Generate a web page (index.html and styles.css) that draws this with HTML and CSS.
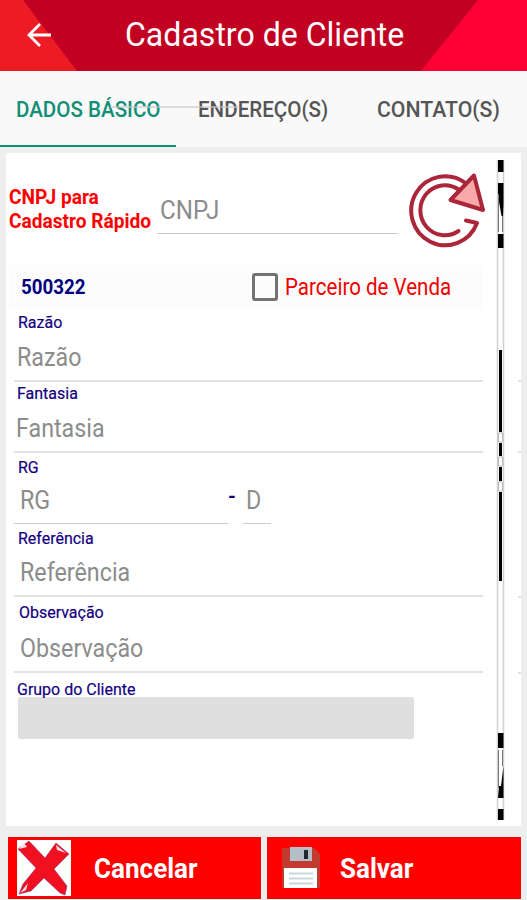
FILE: index.html
```html
<!DOCTYPE html>
<html lang="pt-BR">
<head>
  <meta charset="UTF-8" />
  <meta name="viewport" content="width=device-width, initial-scale=1.0" />
  <title>Cadastro de Cliente</title>
  <link rel="stylesheet" href="styles.css">
</head>
<body>
  <header>
    <svg class="back" viewBox="0 0 26 26" width="26" height="26">
      <path d="M25 13H3M14 2L3 13l11 11" fill="none" stroke="#fff" stroke-width="2.800" />
    </svg>
    <h1><span class="squeeze">Cadastro de Cliente</span></h1>
  </header>

  <nav class="tabs">
    <a class="tab active"><span class="squeeze">DADOS BÁSICO</span></a>
    <a class="tab"><span class="squeeze">ENDEREÇO(S)</span></a>
    <a class="tab last"><span class="squeeze">CONTATO(S)</span></a>
    <div class="strike"></div>
  </nav>

  <main class="card">
    <form>
      <div class="cnpj-row">
        <div class="cnpj-label"><span class="squeeze">CNPJ para<br>Cadastro Rápido</span></div>
        <div class="cnpj-input"><span class="squeeze">CNPJ</span></div>
        <svg class="reload" viewBox="0 0 78 78" width="78" height="78">
          <g fill="none" stroke="#ab2638" stroke-width="4" stroke-linecap="round" stroke-linejoin="round">
            <path d="M57.500 11A34 34.500 0 1 0 69 51L58 48.500" />
            <path d="M50.500 17.500A24.500 25 0 1 0 50.500 59" />
            <path d="M66 3.500L42.500 28L75 38Z" fill="#f9a9a9" />
          </g>
        </svg>
      </div>

      <div class="code-row">
        <div class="code"><span class="squeeze">500322</span></div>
        <div class="check"></div>
        <div class="partner"><span class="squeeze">Parceiro de Venda</span></div>
      </div>

      <div class="field razao">
        <label><span class="squeeze">Razão</span></label>
        <div class="value"><span class="squeeze">Razão</span></div>
      </div>
      <div class="field fantasia">
        <label><span class="squeeze">Fantasia</span></label>
        <div class="value"><span class="squeeze">Fantasia</span></div>
      </div>
      <div class="field rg">
        <label><span class="squeeze">RG</span></label>
        <div class="split">
          <div class="value"><span class="squeeze">RG</span></div>
          <b class="dash">-</b>
          <div class="value digit"><span class="squeeze">D</span></div>
        </div>
      </div>
      <div class="field referencia">
        <label><span class="squeeze">Referência</span></label>
        <div class="value"><span class="squeeze">Referência</span></div>
      </div>
      <div class="field observacao">
        <label><span class="squeeze">Observação</span></label>
        <div class="value"><span class="squeeze">Observação</span></div>
      </div>
      <div class="field grupo">
        <label><span class="squeeze">Grupo do Cliente</span></label>
        <div class="select"></div>
      </div>
    </form>

    <svg class="rail" viewBox="0 0 10 662" width="10" height="662">
      <path d="M1.500 0V660M7.500 0V660" stroke="#d0d0d0" stroke-width="1.500" />
      <path d="M2 0h5.500v12H2zM2 23h5.500v21L7 56H5.500L2 36zM2 74h5.500v14H2zM2 573h5.500v15H2zM7.500 606v32H2l1-12h2zM2 649h5.500v11H2z" fill="#000" />
      <path d="M2.500 34v38M6.500 56v16M2.500 590v38M6.500 590v16" stroke="#777" />
      <path d="M4.500 190V272M4.500 283v13M4.500 307v14M4.500 332v89" stroke="#000" stroke-width="3" />
      <path d="M2.500 273h4v9h-4zM2.500 297h4v9h-4zM2.500 322h4v9h-4z" fill="#fff" stroke="#bbb" />
    </svg>

    <div class="ticks">
      <i class="t1"></i><i class="t2"></i><i class="t3"></i><i class="t4"></i>
    </div>
  </main>

  <footer>
    <button type="button">
      <svg class="cross" viewBox="0 0 54 56" width="54" height="56">
        <rect width="54" height="56" fill="#fff" />
        <path d="M1 9L12 1L28 18L39 3L52 14L37 29L50 46L48 55L43 53L27 38L14 51L2 54L6 44L19 28Z" fill="#f01020" stroke="#8c3a80" stroke-width=".6" />
        <path d="M2 9l5-6 3 4zM39 5l10 8-9-3zM3 53l8-10-2 7z" fill="#ffdce5" />
      </svg>
      <span class="squeeze">Cancelar</span>
    </button>
    <button type="button" class="save">
      <svg class="disk" viewBox="0 0 40 42" width="40" height="42">
        <path d="M1 1h32l6 6v34H1z" fill="#c23a30" />
        <path d="M9 0h22v14H9z" fill="#b4bec6" />
        <path d="M23 3h4v9h-4z" fill="#202832" />
        <path d="M3 21h33v20H3z" fill="#fff" />
        <path d="M8 26.500h24M8 31.500h24M8 36.500h24" stroke="#ccd5da" stroke-width="2" />
      </svg>
      <span class="squeeze">Salvar</span>
    </button>
  </footer>
</body>
</html>
```
FILE: styles.css
```css
* {
  box-sizing: border-box;
}

body {
  margin: 0;
  height: 900px;
  background: #eee;
  font-family: Roboto, sans-serif;
  overflow: hidden;
}

/* the app font is slightly condensed */
.squeeze {
  display: inline-block;
  transform: scaleX(0.93);
  transform-origin: left center;
  white-space: nowrap;
}

header {
  height: 71px;
  display: flex;
  align-items: center;
  padding-left: 26px;
  background: #c20022;
  position: relative;
  isolation: isolate;
}

header::before,
header::after {
  content: "";
  position: absolute;
  top: 0;
  height: 71px;
  z-index: -1;
}

header::before {
  left: 0;
  width: 77px;
  background: #ed1c24;
  clip-path: polygon(0 0, 23px 0, 77px 100%, 0 100%);
}

header::after {
  right: 0;
  width: 106px;
  background: #ff0033;
  clip-path: polygon(57px 0, 100% 0, 100% 100%, 0 100%);
}

.back {
  margin-bottom: 2px;
}

h1 {
  margin: 0 0 4px 73px;
  font-size: 34px;
  font-weight: 400;
  color: #fff;
}

h1 .squeeze {
  transform: scaleX(0.943);
}

.tabs {
  height: 76px;
  display: flex;
  position: relative;
  background: #f9f9f9;
}

.tab {
  width: 176px;
  padding: 25px 0 0 16px;
  font-size: 22px;
  line-height: 28px;
  font-weight: 500;
  color: #555;
}

.tab + .tab {
  padding-left: 22px;
}

.tab.last {
  padding-left: 26px;
}

.tab .squeeze {
  transform: scaleX(0.935);
}

.tab.last .squeeze {
  transform: scaleX(0.965);
}

.tab.active {
  color: #138f78;
  border-bottom: 2px solid #138f78;
}

.strike {
  position: absolute;
  left: 110px;
  top: 35px;
  width: 128px;
  height: 2px;
  background: rgba(200, 200, 200, 0.6);
}

.card {
  width: 515px;
  height: 673px;
  margin: 6px 0 0 6px;
  background: #fff;
  display: flex;
}

form {
  width: 477px;
  padding-left: 3px;
}

.cnpj-row {
  height: 112px;
  display: flex;
}

.cnpj-label {
  flex: none;
  width: 148px;
  padding-top: 32px;
  font-size: 20px;
  line-height: 24px;
  font-weight: 700;
  color: #f00;
}

.cnpj-label .squeeze {
  transform: scaleX(0.955);
}

.cnpj-input {
  flex: none;
  width: 241px;
  height: 81px;
  padding: 41px 0 0 3px;
  border-bottom: 1px solid #ccc;
  font-size: 26px;
  line-height: 32px;
  color: #8c8c8c;
}

.reload {
  flex: none;
  margin: 19px 0 0 10px;
}

.code-row {
  height: 43px;
  display: flex;
  align-items: center;
  background: #fcfcfc;
}

.code {
  width: 243px;
  padding-left: 12px;
  font-size: 21px;
  font-weight: 700;
  color: #00007f;
}

.code .squeeze,
.partner .squeeze {
  transform: scaleX(0.893);
}

.check {
  width: 26px;
  height: 28px;
  border: 3px solid #737373;
  border-radius: 3px;
}

.partner {
  margin: 2px 0 0 7px;
  font-size: 23px;
  color: #f00000;
}

.field {
  margin-left: 5px;
  display: flex;
  flex-direction: column;
}

.field label {
  height: 18px;
  padding-left: 4px;
  font-size: 17px;
  line-height: 18px;
  color: #14007f;
  -webkit-text-stroke: 0.2px #14007f;
}

.field label .squeeze {
  transform: scaleX(0.94);
}

.value {
  flex: 1;
  border-bottom: 2px solid #e2e2e2;
  padding: 10px 0 0 3px;
  font-size: 26px;
  line-height: 32px;
  color: #8c8c8c;
}

.value .squeeze {
  transform: scaleX(0.895);
}

.razao {
  height: 74px;
  padding-top: 5px;
}

.fantasia {
  height: 71px;
  padding-top: 2px;
}

.fantasia label {
  padding-left: 3px;
}

.fantasia .value {
  padding-left: 2px;
}

.rg {
  height: 71px;
  padding-top: 5px;
}

.split {
  flex: 1;
  display: flex;
}

.rg .value {
  flex: none;
  width: 214px;
  padding: 8px 0 0 6px;
  border-bottom-width: 1px;
  border-color: #ccc;
}

.rg .digit {
  width: 28px;
  padding-left: 3px;
}

.dash {
  width: 15px;
  padding-top: 8px;
  font-size: 20px;
  color: #14007f;
}

.referencia {
  height: 73px;
  padding-top: 5px;
}

.referencia .value,
.observacao .value {
  padding-left: 6px;
}

.referencia .value {
  padding-top: 9px;
}

.observacao {
  height: 76px;
  padding-top: 6px;
}

.observacao label {
  padding-left: 5px;
}

.observacao .value {
  padding-top: 11px;
}

.grupo {
  padding-top: 7px;
}

.grupo label {
  height: 17px;
  padding-left: 3px;
}

.select {
  width: 396px;
  height: 42px;
  margin-left: 4px;
  background: #dfdfdf;
  border-radius: 2px;
}

.rail {
  margin: 7px 0 0 13px;
}

/* ends of the field lines on the right edge */
.ticks {
  width: 3px;
  margin-left: auto;
  display: flex;
  flex-direction: column;
}

.ticks i {
  height: 2px;
  background: #e2e2e2;
}

.t1 {
  margin-top: 227px;
}

.t2 {
  margin-top: 69px;
}

.t3 {
  margin-top: 143px;
}

.t4 {
  margin-top: 74px;
}

footer {
  display: flex;
  gap: 6px;
  padding: 11px 6px 0 8px;
}

button {
  width: 253px;
  height: 62px;
  padding: 0 0 0 9px;
  border: 0;
  background: #f00;
  color: #fff;
  display: flex;
  align-items: center;
  font-family: inherit;
  font-size: 28px;
  font-weight: 700;
}

.cross {
  margin-right: 23px;
}

.save {
  width: 254px;
  padding-left: 14px;
}

.disk {
  margin-right: 19px;
}
```
